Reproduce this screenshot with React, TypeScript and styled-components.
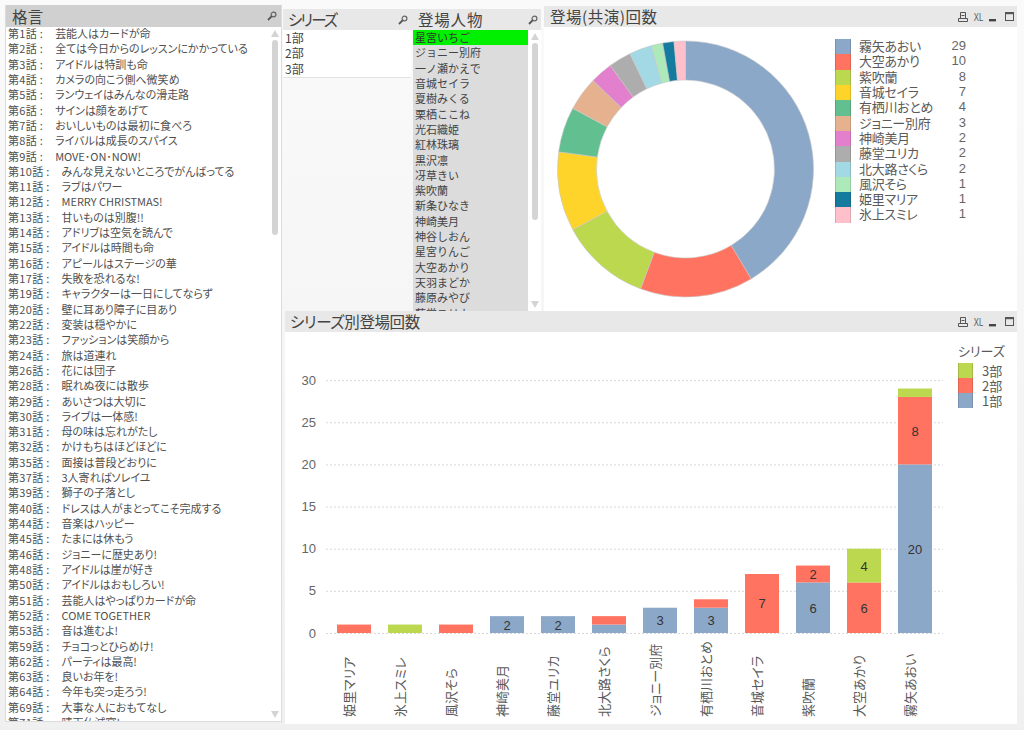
import React from "react";
import styled, { createGlobalStyle } from "styled-components";

const FONT = `"Noto Sans CJK JP", "Liberation Sans", sans-serif`;
const ROW = 15.32;

const GlobalStyle = createGlobalStyle`
  html, body { margin: 0; padding: 0; background: #f2f2f2; }
  body { font-family: ${FONT}; color: #505050; }
`;

const COLORS = ["#8ca8c9", "#ff7360", "#bcd84f", "#ffd42a", "#62bf90", "#e5b18f", "#e380ce", "#adadad", "#a3d8e5", "#aee9ba", "#147b9e", "#ffc0cc"];

const QUOTES: [string, string][] = [
  ["1", "芸能人はカードが命"], ["2", "全ては今日からのレッスンにかかっている"], ["3", "アイドルは特訓も命"],
  ["4", "カメラの向こう側へ微笑め"], ["5", "ランウェイはみんなの滑走路"], ["6", "サインは顔をあげて"],
  ["7", "おいしいものは最初に食べろ"], ["8", "ライバルは成長のスパイス"], ["9", "MOVE･ON･NOW!"],
  ["10", "みんな見えないところでがんばってる"], ["11", "ラブはパワー"], ["12", "MERRY CHRISTMAS!"],
  ["13", "甘いものは別腹!!"], ["14", "アドリブは空気を読んで"], ["15", "アイドルは時間も命"],
  ["16", "アピールはステージの華"], ["17", "失敗を恐れるな!"], ["19", "キャラクターは一日にしてならず"],
  ["20", "壁に耳あり障子に目あり"], ["22", "変装は穏やかに"], ["23", "ファッションは笑顔から"],
  ["24", "旅は道連れ"], ["26", "花には団子"], ["28", "眠れぬ夜には散歩"], ["29", "あいさつは大切に"],
  ["30", "ライブは一体感!"], ["31", "母の味は忘れがたし"], ["32", "かけもちはほどほどに"],
  ["35", "面接は普段どおりに"], ["37", "3人寄ればソレイユ"], ["39", "獅子の子落とし"],
  ["40", "ドレスは人がまとってこそ完成する"], ["44", "音楽はハッピー"], ["45", "たまには休もう"],
  ["46", "ジョニーに歴史あり!"], ["48", "アイドルは崖が好き"], ["50", "アイドルはおもしろい!"],
  ["51", "芸能人はやっぱりカードが命"], ["52", "COME TOGETHER"], ["53", "音は進むよ!"],
  ["59", "チョコっとひらめけ!"], ["62", "パーティは最高!"], ["63", "良いお年を!"],
  ["64", "今年も突っ走ろう!"], ["69", "大事な人におもてなし"], ["71", "晴天仏滅宴!"],
];

const CHARACTERS = ["星宮いちご", "ジョニー別府", "一ノ瀬かえで", "音城セイラ", "夏樹みくる", "栗栖ここね", "光石織姫", "紅林珠璃", "黒沢凛", "冴草きい", "紫吹蘭", "新条ひなき", "神崎美月", "神谷しおん", "星宮りんご", "大空あかり", "天羽まどか", "藤原みやび", "藤堂ユリカ"];

const COUNTS: [string, number][] = [
  ["霧矢あおい", 29], ["大空あかり", 10], ["紫吹蘭", 8], ["音城セイラ", 7], ["有栖川おとめ", 4], ["ジョニー別府", 3],
  ["神崎美月", 2], ["藤堂ユリカ", 2], ["北大路さくら", 2], ["風沢そら", 1], ["姫里マリア", 1], ["氷上スミレ", 1],
];

const BARS: [string, number, number, number][] = [
  ["姫里マリア", 0, 1, 0], ["氷上スミレ", 0, 0, 1], ["風沢そら", 0, 1, 0], ["神崎美月", 2, 0, 0],
  ["藤堂ユリカ", 2, 0, 0], ["北大路さくら", 1, 1, 0], ["ジョニー別府", 3, 0, 0], ["有栖川おとめ", 3, 1, 0],
  ["音城セイラ", 0, 7, 0], ["紫吹蘭", 6, 2, 0], ["大空あかり", 0, 6, 4], ["霧矢あおい", 20, 8, 1],
];

const Page = styled.div`
  width: 1024px;
  height: 730px;
  overflow: hidden;
  display: flex;
  padding: 5px 7px 6px 5px;
  box-sizing: border-box;
  background: linear-gradient(#fafafa, #f0f0f0);
`;

const QuotePanel = styled.section`
  width: 277px;
  height: 717px;
  flex: none;
  display: flex;
  flex-direction: column;
  background: #fff;
  border: 1px solid #dcdcdc;
  border-top: none;
  box-sizing: border-box;
`;

const Right = styled.div`
  flex: 1;
  margin-left: 1px;
  display: flex;
  flex-direction: column;
  min-width: 0;
`;

const TopRow = styled.div`
  height: 306px;
  flex: none;
  display: flex;
`;

const ListBox = styled.section<{ $w: number }>`
  width: ${(p) => p.$w}px;
  flex: none;
  margin-top: 4px;
  display: flex;
  flex-direction: column;
  overflow: hidden;
`;

const Header = styled.header<{ $dark?: boolean; $h?: number; $pad?: number; $right?: number }>`
  height: ${(p) => p.$h ?? 21}px;
  flex: none;
  display: flex;
  align-items: center;
  justify-content: space-between;
  padding: 0 ${(p) => p.$right ?? 3}px 0 ${(p) => p.$pad ?? 6}px;
  background: ${(p) => (p.$dark ? "#d0d0d0" : "#e8e8e8")};
  color: #444;
`;

const Title = styled.h2<{ $spacing?: number }>`
  margin: 0;
  font-size: 15.5px;
  font-weight: 400;
  line-height: 21px;
  letter-spacing: ${(p) => p.$spacing ?? 0.3}px;
  white-space: nowrap;
  font-feature-settings: "palt";
`;

const Tools = styled.div`
  display: flex;
  align-items: center;
  gap: 6px;
  color: #555;
`;

const Xl = styled.span`
  font: 11px "Liberation Sans", sans-serif;
  transform: scaleX(0.7);
  width: 9px;
  display: flex;
  justify-content: center;
`;

const ListBody = styled.div`
  flex: 1;
  display: flex;
  min-height: 0;
  overflow: hidden;
`;

const Rows = styled.div`
  flex: 1;
  min-width: 0;
  overflow: hidden;
  padding-left: 2px;
`;

const QuoteRow = styled.div`
  height: ${ROW}px;
  line-height: ${ROW - 2}px;
  font-size: 11px;
  white-space: nowrap;
  font-feature-settings: "palt";
  letter-spacing: -0.03px;
`;

const Episode = styled.span`
  display: inline-block;
  margin-right: 12px;
  letter-spacing: 0.3px;
`;

const SeriesRows = styled.div`
  background: #fff;
  height: 47px;
  border-bottom: 1px solid #e2e2e2;
  margin-right: 2px;
`;

const PlainRow = styled.div<{ $selected?: boolean; $size: number }>`
  height: ${ROW}px;
  line-height: ${ROW}px;
  font-size: ${(p) => p.$size}px;
  white-space: nowrap;
  padding-left: 2px;
  color: ${(p) => (p.$selected ? "#333" : "#444")};
  background: ${(p) => (p.$selected ? "#00f000" : "transparent")};
`;

const CharacterRows = styled.div`
  width: 115px;
  flex: none;
  background: #dcdcdc;
  overflow: hidden;
`;

const Track = styled.div<{ $w: number }>`
  width: ${(p) => p.$w}px;
  flex: none;
  display: flex;
  flex-direction: column;
  align-items: center;
  background: #fff;
  padding: 3px 0;
  box-sizing: border-box;
`;

const Arrow = styled.div<{ $down?: boolean }>`
  width: 0;
  height: 0;
  flex: none;
  border-left: 4px solid transparent;
  border-right: 4px solid transparent;
  ${(p) => (p.$down ? "border-top: 7px solid #d4d4d4;" : "border-bottom: 7px solid #d4d4d4;")}
`;

const Thumb = styled.div<{ $h: number }>`
  width: 6px;
  height: ${(p) => p.$h}px;
  flex: none;
  margin-top: 3px;
  border-radius: 3px;
  background: #d4d4d4;
`;

const Spacer = styled.div`
  flex: 1;
`;

const DonutPanel = styled.section`
  flex: 1;
  margin-left: 3px;
  margin-top: 1px;
  display: flex;
  flex-direction: column;
  min-width: 0;
`;

const PanelBody = styled.div`
  flex: 1;
  display: flex;
  background: #fff;
  min-height: 0;
`;

const DonutLegend = styled.div`
  padding: 12px 0 0 0;
  display: grid;
  grid-template-columns: 16px 93px 22px;
  grid-auto-rows: ${ROW}px;
  align-content: start;
  margin-left: 6px;
`;

const Swatch = styled.div<{ $c: string }>`
  background: ${(p) => p.$c};
  box-shadow: inset 1px 0 #0002, inset -1px 0 #0002;
`;

const LegendName = styled.div`
  font-size: 13px;
  line-height: ${ROW - 2}px;
  padding-left: 8px;
  white-space: nowrap;
  font-feature-settings: "palt";
  letter-spacing: -0.3px;
  color: #5a5a5a;
`;

const LegendValue = styled.div`
  font: 13px/${ROW - 2}px "Liberation Sans", sans-serif;
  text-align: right;
  color: #666;
`;

const ChartPanel = styled.section`
  flex: 1;
  margin-left: 2px;
  display: flex;
  flex-direction: column;
  min-height: 0;
`;

const SeriesLegend = styled.div`
  padding: 9px 0 0 8px;
`;

const SeriesLegendTitle = styled.div`
  font-size: 13px;
  line-height: 20px;
  margin-bottom: 2px;
  color: #5a5a5a;
  font-feature-settings: "palt";
  white-space: nowrap;
`;

const SeriesKey = styled.div`
  display: grid;
  grid-template-columns: 15px auto;
  grid-auto-rows: 15px;
  justify-content: start;
`;

const SeriesLabel = styled.div`
  font-size: 13px;
  line-height: 15px;
  padding-left: 9px;
  color: #5a5a5a;
`;

const Search = () => (
  <svg width="10" height="10" viewBox="0 0 10 10">
    <circle cx="6.5" cy="3.5" r="2.4" fill="none" stroke="#666" strokeWidth="1.2" />
    <line x1="4.8" y1="5.2" x2="1" y2="9" stroke="#555" strokeWidth="1.8" />
  </svg>
);

const PanelTools = () => (
  <Tools>
    <svg width="10" height="10" viewBox="0 0 10 10" fill="none" stroke="#555">
      <path d="M2.5 .5h5v6h-5zM.5 6.5v3h9v-3z" />
      <path d="M3.5 3.5h3" />
    </svg>
    <Xl>XL</Xl>
    <svg width="10" height="10" viewBox="0 0 10 10"><rect y="7" width="7" height="2.4" fill="#444" /></svg>
    <svg width="9" height="9" viewBox="0 0 9 9" fill="none">
      <rect x=".5" y=".5" width="8" height="8" stroke="#555" />
      <rect x="0" y="0" width="9" height="2.2" fill="#555" />
    </svg>
  </Tools>
);

const Donut = () => {
  const cx = 141.5, cy = 142, R = 128, r = 89;
  const total = COUNTS.reduce((s, c) => s + c[1], 0);
  let acc = 0;
  const pt = (rad: number, a: number) => `${(cx + rad * Math.sin(a)).toFixed(2)} ${(cy - rad * Math.cos(a)).toFixed(2)}`;
  return (
    <svg width="285" height="283">
      {COUNTS.map((c, i) => {
        const a0 = (acc / total) * Math.PI * 2;
        acc += c[1];
        const a1 = (acc / total) * Math.PI * 2;
        const large = a1 - a0 > Math.PI ? 1 : 0;
        return (
          <path
            key={c[0]}
            fill={COLORS[i]}
            stroke="#c8c8c8"
            strokeWidth="0.6"
            d={`M${pt(R, a0)}A${R} ${R} 0 ${large} 1 ${pt(R, a1)}L${pt(r, a1)}A${r} ${r} 0 ${large} 0 ${pt(r, a0)}Z`}
          />
        );
      })}
    </svg>
  );
};

const BarChart = () => {
  // plot coordinates are relative to the chart panel body (x 285, y 332)
  const base = 301, unit = 8.43, barW = 34, step = 51, first = 52;
  const fills = [COLORS[0], COLORS[1], COLORS[2]];
  return (
    <svg width="665" height="392">
      {[0, 5, 10, 15, 20, 25, 30].map((t) => (
        <g key={t}>
          <line x1="41" x2="658" y1={base - t * unit + 0.5} y2={base - t * unit + 0.5} stroke="#d8d8d8" strokeDasharray="2 2" />
          <text x="31" y={base - t * unit + 4.5} textAnchor="end" fontFamily="Liberation Sans" fontSize="13" fill="#666">{t}</text>
        </g>
      ))}
      {BARS.map((b, i) => {
        const x = first + i * step;
        let y = base;
        return (
          <g key={b[0]}>
            {[b[1], b[2], b[3]].map((v, k) => {
              if (!v) return null;
              const h = v * unit;
              y -= h;
              return (
                <g key={k}>
                  <rect x={x} y={y} width={barW} height={h} fill={fills[k]} />
                  {v > 1 && (
                    <text x={x + barW / 2} y={y + h / 2 + 5} textAnchor="middle" fontFamily="Liberation Sans" fontSize="13" fill="#333">{v}</text>
                  )}
                </g>
              );
            })}
            <text
              transform={`translate(${x + barW / 2} 385) rotate(-90)`}
              fontSize="13"
              fill="#5a5a5a"
              style={{ fontFeatureSettings: '"palt"' }}
            >
              {b[0]}
            </text>
          </g>
        );
      })}
    </svg>
  );
};

export default function App() {
  return (
    <Page>
      <GlobalStyle />
      <QuotePanel>
        <Header $dark $h={22} $right={4}>
          <Title>格言</Title>
          <Search />
        </Header>
        <ListBody>
          <Rows>
            {QUOTES.map(([n, text]) => (
              <QuoteRow key={n}>
                <Episode>第{n}話 :</Episode>
                {text}
              </QuoteRow>
            ))}
          </Rows>
          <Track $w={13}>
            <Arrow />
            <Thumb $h={195} />
            <Spacer />
            <Arrow $down />
          </Track>
        </ListBody>
      </QuotePanel>
      <Right>
        <TopRow>
          <ListBox $w={130}>
            <Header $pad={5} $right={5}>
              <Title $spacing={-1.9}>シリーズ</Title>
              <Search />
            </Header>
            <SeriesRows>
              {["1部", "2部", "3部"].map((s) => (
                <PlainRow key={s} $size={12}>{s}</PlainRow>
              ))}
            </SeriesRows>
          </ListBox>
          <ListBox $w={128}>
            <Header $pad={5}>
              <Title $spacing={0.8}>登場人物</Title>
              <Search />
            </Header>
            <ListBody>
              <CharacterRows>
                {CHARACTERS.map((c, i) => (
                  <PlainRow key={c} $selected={i === 0} $size={11}>{c}</PlainRow>
                ))}
              </CharacterRows>
              <Track $w={13}>
                <Arrow />
                <Thumb $h={177} />
                <Spacer />
                <Arrow $down />
              </Track>
            </ListBody>
          </ListBox>
          <DonutPanel>
            <Header>
              <Title $spacing={0.5}>登場(共演)回数</Title>
              <PanelTools />
            </Header>
            <PanelBody>
              <Donut />
              <DonutLegend>
                {COUNTS.map(([name, n], i) => (
                  <React.Fragment key={name}>
                    <Swatch $c={COLORS[i]} />
                    <LegendName>{name}</LegendName>
                    <LegendValue>{n}</LegendValue>
                  </React.Fragment>
                ))}
              </DonutLegend>
            </PanelBody>
          </DonutPanel>
        </TopRow>
        <ChartPanel>
          <Header $pad={5}>
            <Title $spacing={-0.4}>シリーズ別登場回数</Title>
            <PanelTools />
          </Header>
          <PanelBody>
            <BarChart />
            <SeriesLegend>
              <SeriesLegendTitle>シリーズ</SeriesLegendTitle>
              <SeriesKey>
                {["3部", "2部", "1部"].map((s, i) => (
                  <React.Fragment key={s}>
                    <Swatch $c={COLORS[2 - i]} />
                    <SeriesLabel>{s}</SeriesLabel>
                  </React.Fragment>
                ))}
              </SeriesKey>
            </SeriesLegend>
          </PanelBody>
        </ChartPanel>
      </Right>
    </Page>
  );
}
